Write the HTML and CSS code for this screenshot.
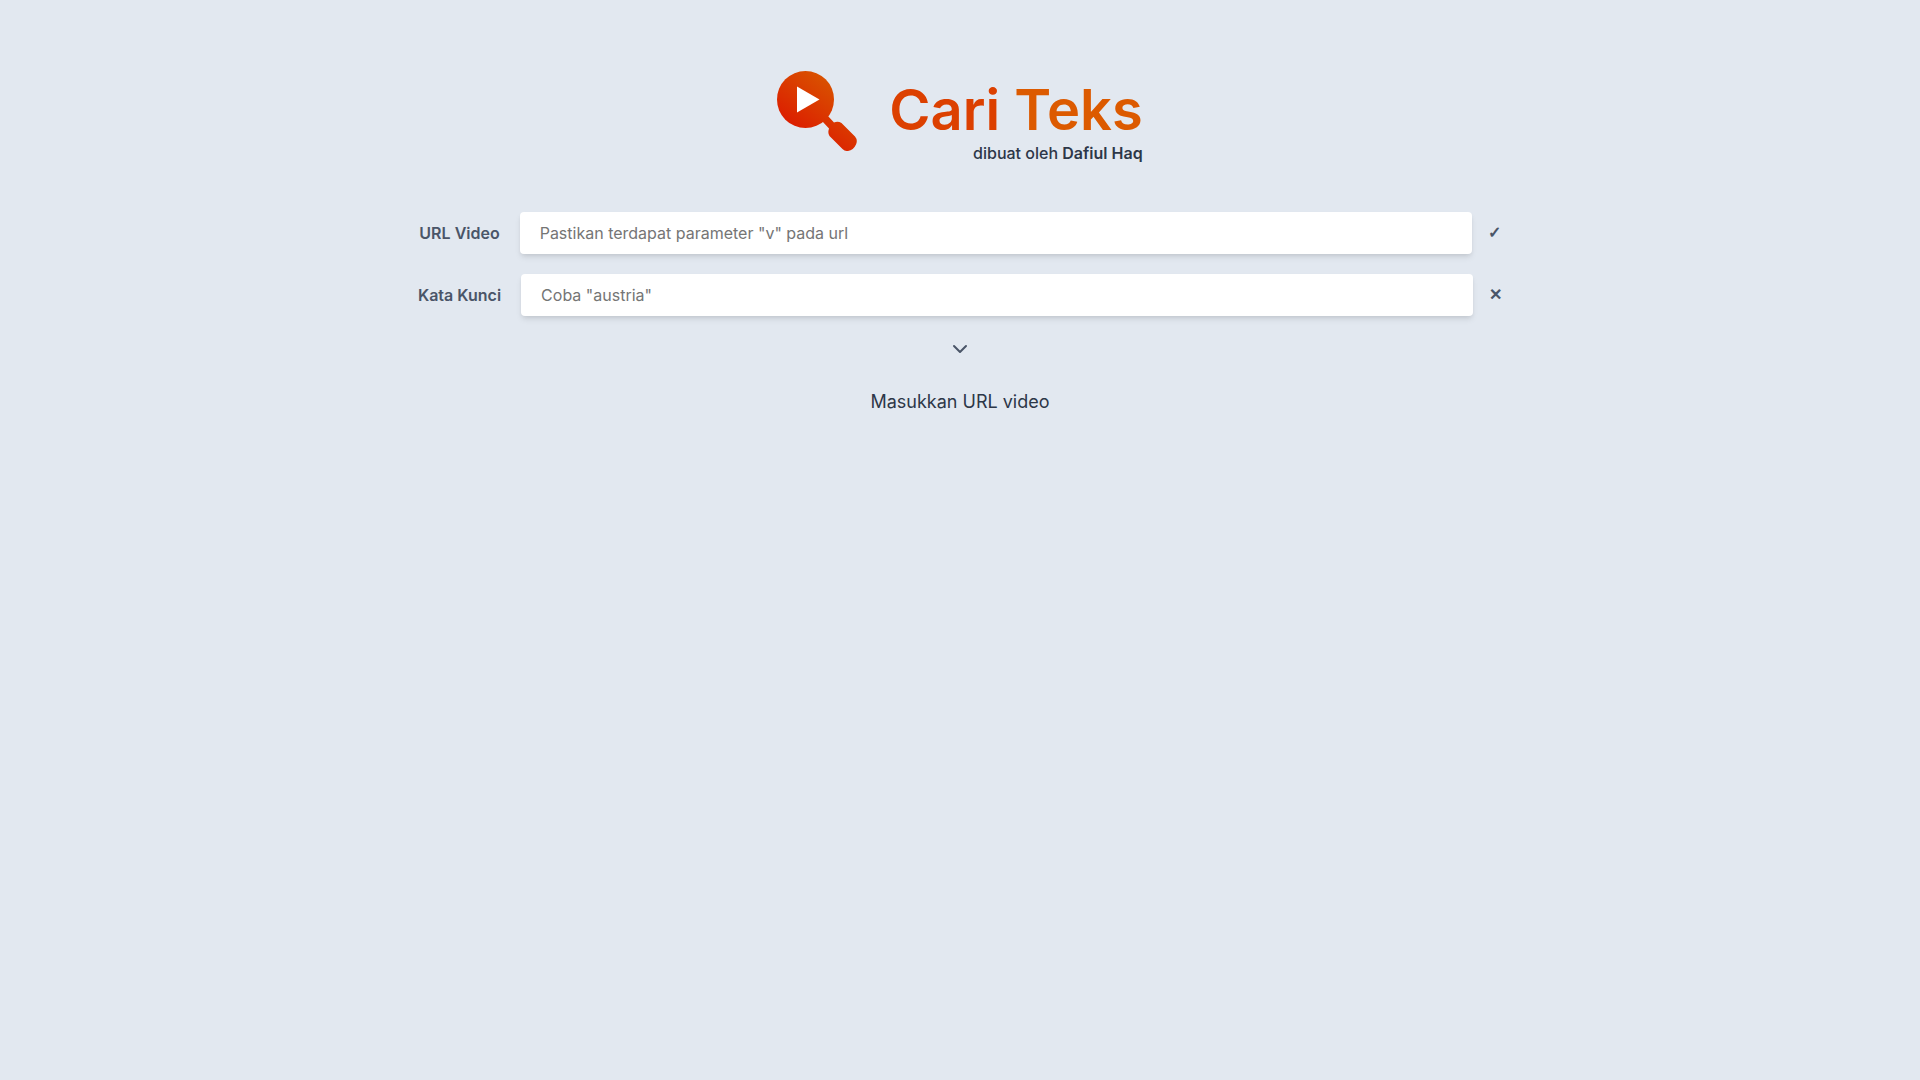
FILE: index.html
```html
<!DOCTYPE html>
<html lang="id">
<head>
<meta charset="utf-8">
<meta name="viewport" content="width=device-width, initial-scale=1">
<title>Cari Teks</title>
<link rel="stylesheet" href="styles.css">
</head>
<body>
<header class="header">
  <svg class="logo" viewBox="0 0 80 80" aria-hidden="true">
    <defs>
      <linearGradient id="flame" gradientUnits="userSpaceOnUse" x1="10" y1="54" x2="46" y2="4">
        <stop offset="0" stop-color="#dc1c00"/>
        <stop offset="1" stop-color="#d95200"/>
      </linearGradient>
    </defs>
    <g fill="url(#flame)">
      <circle cx="28.500" cy="28.500" r="28.500"/>
      <path d="M45 50 L50.500 44.500 L57 51.500 Q61 50 64.500 52 L78 65.500 Q81 69 79 73.500 Q76.500 79 71 80 Q68 80.300 65.500 78 L52.500 65 Q50.500 62.500 52 57.500 Z"/>
    </g>
    <path fill="#fff" d="M20 15.500 L42.500 28.500 L20 41.500 Z"/>
  </svg>
  <div class="brand">
    <h1 class="title"><span class="title-first">Cari</span> <span class="title-second">Teks</span></h1>
    <p class="byline">dibuat oleh <a class="author" href="#">Dafiul Haq</a></p>
  </div>
</header>
<main class="search">
  <form class="form">
    <div class="row">
      <label class="label" for="url">URL Video</label>
      <input class="field" id="url" type="text" placeholder="Pastikan terdapat parameter &quot;v&quot; pada url">
      <button class="action" type="submit" aria-label="Muat video">✓</button>
    </div>
    <div class="row">
      <label class="label" for="keyword">Kata Kunci</label>
      <input class="field" id="keyword" type="text" placeholder="Coba &quot;austria&quot;">
      <button class="action" type="reset" aria-label="Hapus kata kunci">✕</button>
    </div>
  </form>
  <button class="toggle" type="button" aria-label="Opsi lainnya">
    <svg class="chevron" viewBox="0 0 24 24" aria-hidden="true"><path d="M6 9l6 6 6-6"/></svg>
  </button>
  <p class="message">Masukkan URL video</p>
</main>
</body>
</html>
```
FILE: styles.css
```css
*, *::before, *::after {
  box-sizing: border-box;
}

body {
  margin: 0;
  padding: 64px 32px;
  background: #e2e8f0;
  color: #2d3748;
  font: 400 16px/24px Inter, "Liberation Sans", sans-serif;
}

h1, p {
  margin: 0;
}

button, input {
  border: 0;
  font: inherit;
}

button {
  padding: 0;
  background: none;
  color: #4a5568;
  cursor: pointer;
}

.header {
  display: flex;
  justify-content: center;
  align-items: center;
  gap: 32px;
}

.logo {
  width: 80px;
  height: 80px;
  margin-bottom: 6px;
}

.title {
  padding-top: 14px;
  font-size: 56px;
  line-height: 64px;
  font-weight: 600;
}

.title-first {
  color: #dc4000;
}

.title-second {
  color: #dc5a00;
}

.byline {
  line-height: 22px;
  text-align: right;
  font-weight: 500;
}

.author {
  color: inherit;
  font-weight: 600;
  text-decoration: none;
}

.search {
  display: flex;
  flex-direction: column;
  align-items: center;
  padding-top: 48px;
}

.form {
  display: flex;
  flex-direction: column;
  gap: 20px;
  width: 100%;
}

.row {
  display: flex;
  justify-content: center;
  align-items: center;
}

.label {
  flex: none;
  padding-right: 20px;
  color: #4a5568;
  font-weight: 600;
}

.field {
  width: 100%;
  max-width: 952px;
  height: 42px;
  padding: 0 20px;
  border-radius: 4px;
  background: #fff;
  box-shadow: 0 4px 6px -1px rgba(0, 0, 0, 0.1), 0 2px 4px -1px rgba(0, 0, 0, 0.06);
}

.field::placeholder {
  color: #757575;
}

.action {
  flex: none;
  padding-left: 16px;
  font-family: "Liberation Sans", sans-serif;
  font-weight: 700;
}

.toggle {
  width: 24px;
  height: 24px;
  margin-top: 21px;
}

.chevron {
  display: block;
  width: 24px;
  height: 24px;
  fill: none;
  stroke: currentColor;
  stroke-width: 2;
  stroke-linecap: round;
  stroke-linejoin: round;
}

.message {
  margin-top: 27px;
  font-size: 18px;
  line-height: 28px;
}
```
